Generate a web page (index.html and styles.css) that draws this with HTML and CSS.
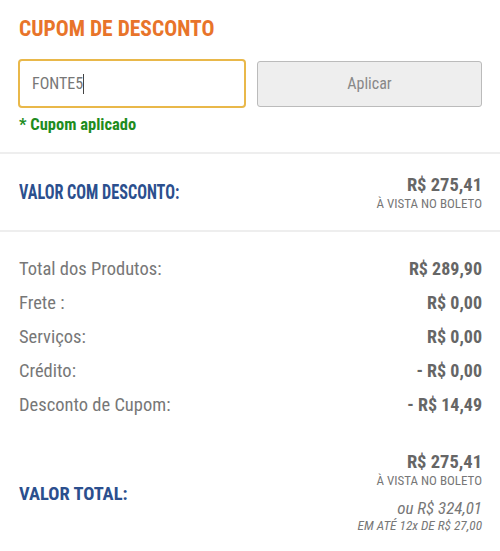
FILE: index.html
```html
<!DOCTYPE html>
<html lang="pt-BR">
<head>
    <meta charset="UTF-8" />
    <meta name="viewport" content="width=device-width, initial-scale=1.0"/>
    <title>Resumo do Pedido</title>
    <link rel="stylesheet" href="styles.css">
</head>
<body>
    <section class="coupon">
        <h2 class="coupon-title">CUPOM DE DESCONTO</h2>
        <div class="coupon-form">
            <div class="coupon-input"><span>FONTE5</span><span class="caret"></span></div>
            <button type="button" class="coupon-btn">Aplicar</button>
        </div>
        <p class="coupon-status">* Cupom aplicado</p>
    </section>

    <section class="discount">
        <div class="label-blue label-tight">VALOR COM DESCONTO:</div>
        <div class="price-block">
            <div class="price">R$ 275,41</div>
            <div class="price-note">À VISTA NO BOLETO</div>
        </div>
    </section>

    <section class="summary">
        <div class="row"><span>Total dos Produtos:</span><strong>R$ 289,90</strong></div>
        <div class="row"><span>Frete :</span><strong>R$ 0,00</strong></div>
        <div class="row"><span>Serviços:</span><strong>R$ 0,00</strong></div>
        <div class="row"><span>Crédito:</span><strong>- R$ 0,00</strong></div>
        <div class="row"><span>Desconto de Cupom:</span><strong>- R$ 14,49</strong></div>
    </section>

    <section class="total">
        <div class="label-blue label-total">VALOR TOTAL:</div>
        <div class="price-block">
            <div class="price">R$ 275,41</div>
            <div class="price-note">À VISTA NO BOLETO</div>
            <div class="installment">ou R$ 324,01</div>
            <div class="installment-note">EM ATÉ 12x DE R$ 27,00</div>
        </div>
    </section>
</body>
</html>
```

FILE: styles.css
```css
body {
    margin: 0;
    padding: 0;
    background: #ffffff;
    font-family: "Roboto Condensed", Roboto, "Liberation Sans", sans-serif;
    font-stretch: condensed;
    color: #777;
}
.coupon {
    padding: 16px 18px 18px 18px;
    border-bottom: 2px solid #eeeeee;
}
.coupon-title {
    margin: 0 0 17px 1px;
    font-size: 21.5px;
    font-weight: 700;
    color: #e8742a;
    line-height: 26px;
}
.coupon-form {
    display: flex;
    gap: 11px;
    align-items: center;
}
.coupon-input {
    flex: 0 0 228px;
    box-sizing: border-box;
    height: 49px;
    border: 2px solid #e9b84a;
    border-radius: 4px;
    padding: 0 12px;
    display: flex;
    align-items: center;
    font-size: 16px;
    color: #777;
}
.caret {
    display: inline-block;
    width: 1px;
    height: 20px;
    background: #444;
}
.coupon-btn {
    flex: 0 0 225px;
    height: 46px;
    background-color: #eeeeee;
    border: 1px solid #bbbbbb;
    border-radius: 3px;
    font-family: inherit;
    font-stretch: condensed;
    font-size: 16px;
    color: #888;
}
.coupon-status {
    margin: 8px 0 0 1px;
    font-size: 16.5px;
    line-height: 18px;
    font-weight: 700;
    color: #1e8c1e;
}
.discount {
    display: flex;
    justify-content: space-between;
    align-items: center;
    padding: 19px 18px 19px 19px;
    border-bottom: 2px solid #eeeeee;
}
.label-blue {
    font-size: 18px;
    font-weight: 700;
    color: #2b4f8e;
}
.label-tight {
    font-size: 19.5px;
    transform: scaleX(0.83);
    transform-origin: left center;
    white-space: nowrap;
}
.label-total {
    font-size: 18.5px;
    padding-top: 3px;
}
.price-block {
    text-align: right;
}
.price {
    font-size: 18.5px;
    font-weight: 700;
    color: #666;
    line-height: 24px;
}
.price-note {
    font-size: 13px;
    color: #777;
    line-height: 14px;
}
.summary {
    padding: 20px 18px 0 19px;
}
.row {
    display: flex;
    justify-content: space-between;
    font-size: 18.5px;
    line-height: 34px;
}
.row strong {
    font-size: 18px;
    color: #666;
}
.total {
    display: flex;
    justify-content: space-between;
    align-items: center;
    padding: 28px 18px 0 19px;
}
.installment {
    margin-top: 10px;
    font-size: 17px;
    font-style: italic;
    color: #777;
    line-height: 20px;
}
.installment-note {
    font-size: 13.3px;
    font-style: italic;
    color: #777;
    line-height: 16px;
}
```
